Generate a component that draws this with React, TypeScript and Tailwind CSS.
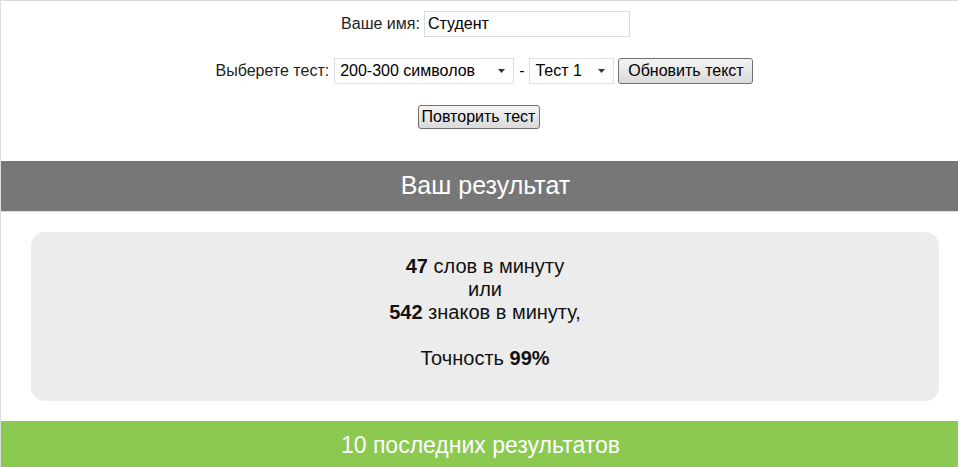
import React from 'react';

function Caret() {
  return (
    <svg width="7" height="4" viewBox="0 0 7 4" className="pointer-events-none absolute right-[8px] top-1/2 -translate-y-1/2">
      <path d="M0 0 L7 0 L3.5 4 Z" fill="#333" />
    </svg>
  );
}

function FakeSelect({ value, width }: { value: string; width: string }) {
  return (
    <div className={`relative h-[26px] ${width} border border-[#dbe0e8] bg-white pl-[5px] flex items-center text-[16px] text-black`}>
      <span>{value}</span>
      <Caret />
    </div>
  );
}

function WinButton({ children, width }: { children: React.ReactNode; width: string }) {
  return (
    <button
      className={`${width} rounded-[3px] border border-[#707070] bg-gradient-to-b from-[#f4f4f4] to-[#dadada] text-[16px] text-black leading-none flex items-center justify-center`}
    >
      {children}
    </button>
  );
}

export default function App() {
  return (
    <div className="w-full h-[467px] overflow-hidden bg-white font-['Liberation_Sans',Arial,sans-serif]">
      <div className="w-[970px] border-l border-t border-[#dcdcdc] min-h-[467px]">
        {/* form */}
        <div className="flex flex-col items-center pt-[10px] pb-[32px] text-[16px] text-[#222]">
          <div className="flex items-center h-[26px] gap-[4px]">
            <span>Ваше имя:</span>
            <input
              defaultValue="Студент"
              className="w-[206px] h-[26px] border border-[#d8dde5] px-[3px] text-[16px] text-black outline-none"
            />
          </div>

          <div className="flex items-center h-[26px] mt-[21px] gap-[4px] pr-[2px]">
            <span className="mr-[1px]">Выберете тест:</span>
            <FakeSelect value="200-300 символов" width="w-[180px]" />
            <span className="text-black mx-[1px]">-</span>
            <FakeSelect value="Тест 1" width="w-[85px]" />
            <WinButton width="w-[135px] h-[26px]">Обновить текст</WinButton>
          </div>

          <div className="mt-[21px] h-[24px] flex pr-[14px]">
            <WinButton width="w-[122px] h-[24px]">Повторить тест</WinButton>
          </div>
        </div>

        {/* result header */}
        <div className="h-[50px] bg-[#777777] border-b border-[#dddddd] flex items-center justify-center text-white text-[25px] box-content">
          Ваш результат
        </div>

        {/* result box */}
        <div className="px-[30px] pt-[20px] pb-[20px]">
          <div className="h-[169px] w-[908px] rounded-[14px] bg-[#ececec] flex flex-col items-center pt-[23px] text-[20px] leading-[23px] text-[#111]">
            <div><b>47</b> слов в минуту</div>
            <div>или</div>
            <div><b>542</b> знаков в минуту,</div>
            <div className="h-[23px]" />
            <div>Точность <b>99%</b></div>
          </div>
        </div>

        {/* last results */}
        <div className="h-[48px] bg-[#8bc951] flex items-center justify-center pr-[10px] text-white text-[23px]">
          10 последних результатов
        </div>
      </div>
    </div>
  );
}
